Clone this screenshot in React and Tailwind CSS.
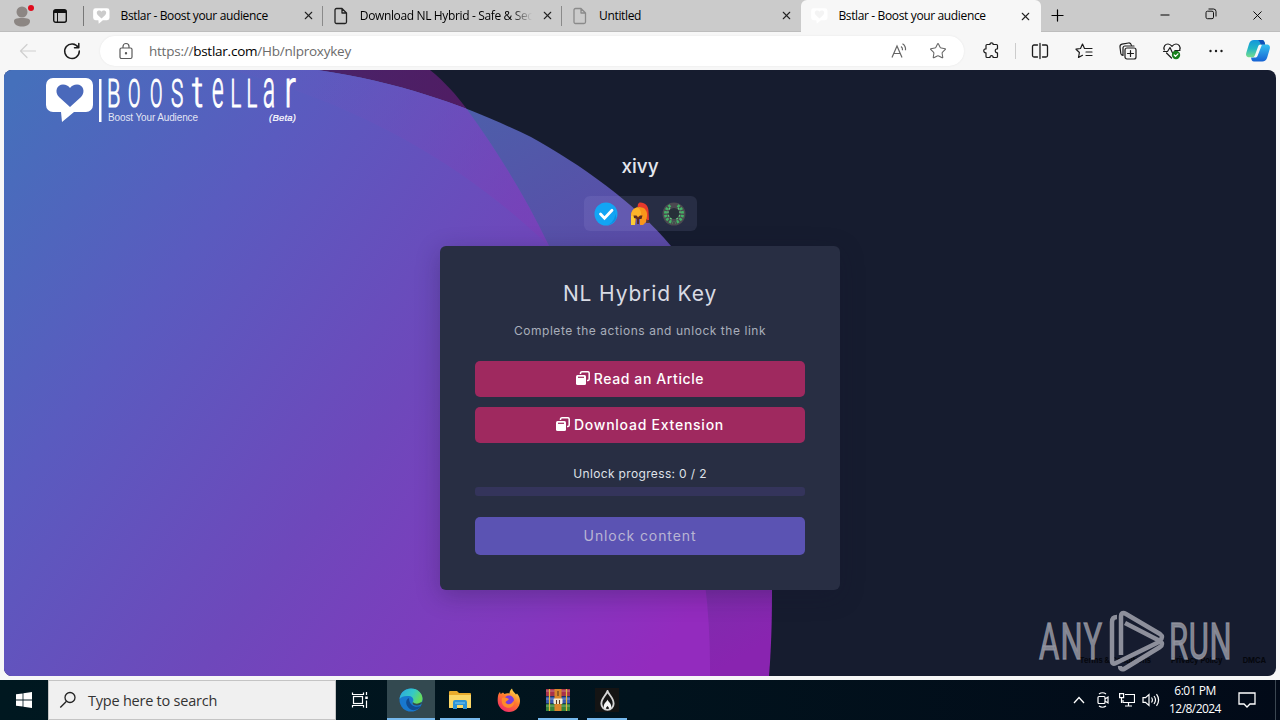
import { X, Plus, Minus, Star } from 'lucide-react';
import clsx from 'clsx';

const UI = "font-['Open_Sans','Noto_Sans',sans-serif]";

function Bubble({ className, fill = '#fff', heart = '#cbcbcb' }) {
  return (
    <svg viewBox="0 0 48 46" className={className}>
      <path d="M7 1h33a7 7 0 0 1 7 7v20a7 7 0 0 1-7 7H28L16 45l-1-10H7a7 7 0 0 1-7-7V8a7 7 0 0 1 7-7z" fill={fill} />
      <path d="M24 30 13 20C8 14.500 11 7.500 17 7.500c3 0 5.500 1.500 7 3.500 1.500-2 4-3.500 7-3.500 6 0 9 7 4 12.500z" fill={heart} />
    </svg>
  );
}

function PageIcon({ className }) {
  return (
    <svg viewBox="0 0 16 18" fill="none" stroke="currentColor" strokeWidth="1.300" strokeLinejoin="round" className={className}>
      <path d="M3.500 1.500h5.500l4.500 4.500v9a1.500 1.500 0 0 1-1.500 1.500H3.500A1.500 1.500 0 0 1 2 15V3a1.500 1.500 0 0 1 1.500-1.500zM9 1.500V6h4.500" />
    </svg>
  );
}

function Tab({ icon, title, active, faded, divider }) {
  return (
    <div className={clsx('relative flex h-8 w-[239.3px] shrink-0 items-center', active ? 'rounded-t-md bg-[#f7f7f7]' : 'border-b border-[#bdbdbd]')}>
      <span className="ml-[9px] flex w-[18px] shrink-0 justify-center">{icon}</span>
      <span className={clsx('ml-[10px] w-[172px] overflow-hidden text-[12px] tracking-[-0.36px] whitespace-nowrap text-black', faded && '[mask-image:linear-gradient(to_right,black_88%,transparent_100%)]')}>
        {title}
      </span>
      <X size={13} strokeWidth={2} className="ml-[9px] shrink-0 text-[#222]" />
      {divider && <span className="absolute top-1.5 right-0 h-5 w-px bg-[#8a8a8a]" />}
    </div>
  );
}

function TabStrip() {
  return (
    <div className="flex h-8 bg-[#cbcbcb]">
      <div className="relative flex w-[83.5px] shrink-0 items-center border-b border-[#bdbdbd]">
        <svg viewBox="0 0 24 24" className="ml-[10px] h-6 w-6">
          <circle cx="12" cy="8" r="5.500" fill="#8c8683" />
          <path d="M4 17c0-2 2-3 8-3s8 1 8 3c0 4-4 5.500-8 5.500S4 21 4 17z" fill="#8c8683" />
          <circle cx="21" cy="4" r="3" fill="#e00b1c" />
        </svg>
        <svg viewBox="0 0 16 16" className="ml-[18px] h-4 w-4" fill="none" stroke="#111">
          <rect x="1.700" y="1.700" width="12.600" height="12.600" rx="2" strokeWidth="1.400" />
          <path d="M2 3.500h12" strokeWidth="3" />
          <path d="M5.500 4v10" />
        </svg>
        <span className="absolute top-1.5 right-0 h-5 w-px bg-[#777]" />
      </div>
      <Tab divider icon={<Bubble className="h-4 w-[17px]" />} title="Bstlar - Boost your audience" />
      <Tab divider faded icon={<PageIcon className="h-[18px] w-4 text-[#222]" />} title="Download NL Hybrid - Safe & Secure" />
      <Tab icon={<PageIcon className="h-[18px] w-4 text-[#8a8a8a]" />} title="Untitled" />
      <Tab active icon={<Bubble className="h-4 w-[17px]" heart="#f4f4f4" />} title="Bstlar - Boost your audience" />
      <div className="flex flex-1 items-center border-b border-[#bdbdbd]">
        <Plus size={19} strokeWidth={1.500} className="ml-[7px]" />
        <div className="ml-auto flex">
          <span className="flex w-[46px] justify-center"><Minus size={14} strokeWidth={1.700} /></span>
          <span className="flex w-[46px] justify-center">
            <svg viewBox="0 0 12 12" className="h-3 w-3" fill="none" stroke="#111">
              <rect x="1" y="3.200" width="7.500" height="7.500" rx="1.500" />
              <path d="M3.500 1h5A2.500 2.500 0 0 1 11 3.500v5" />
            </svg>
          </span>
          <span className="flex w-[46px] justify-center"><X size={15} strokeWidth={1.500} /></span>
        </div>
      </div>
    </div>
  );
}

function ToolIcon({ children, className }) {
  return (
    <span className={clsx('flex w-11 shrink-0 justify-center', className)}>
      <svg viewBox="0 0 20 20" className="h-5 w-5" fill="none" stroke="#1c1c1c" strokeWidth="1.200" strokeLinecap="round" strokeLinejoin="round">
        {children}
      </svg>
    </span>
  );
}

function CopilotIcon() {
  return (
    <svg viewBox="0 0 26 24" className="h-6 w-[26px]">
      <defs>
        <linearGradient id="cpA" x1="0" y1="0" x2="0" y2="1">
          <stop offset="0" stopColor="#1496dc" />
          <stop offset="0.500" stopColor="#23b6c4" />
          <stop offset="1" stopColor="#79dd8c" />
        </linearGradient>
        <linearGradient id="cpB" x1="0" y1="0" x2="0" y2="1">
          <stop offset="0" stopColor="#35c0f0" />
          <stop offset="1" stopColor="#1662d4" />
        </linearGradient>
      </defs>
      <path d="M17 5.500h4.500c3 0 4 2 3.200 4.600l-2.500 8.400c-.8 2.800-2.500 4-5 4H9c-2 0-2.500-1.500-3-4h4c1.500 0 2.300-.8 2.800-2.300z" fill="url(#cpB)" />
      <path d="M9 1h8c2 0 2.500 1.500 3.200 4.500h-4.400c-1.500 0-2.300.8-2.800 2.300L10 16c-.5 1.600-1.300 2.300-2.800 2.300H4.500c-3 0-4-2-3.200-4.600L4 5C4.800 2.200 6.500 1 9 1z" fill="url(#cpA)" />
      <path d="M15.800 5.500h4.400C19.500 2.500 19 1 17 1h-4c1.300.8 1.800 2 2.800 4.500z" fill="#1150b8" />
    </svg>
  );
}

function Toolbar() {
  return (
    <div className="flex h-[38px] items-center">
      <ToolIcon className="ml-1.5">
        <path d="M17.500 10h-15M9 3.500 2.500 10 9 16.500" stroke="#cfcfcf" />
      </ToolIcon>
      <ToolIcon>
        <path d="M16.300 6.500A7.300 7.300 0 1 0 17.300 10M16.800 2.500v4.300h-4.300" strokeWidth="1.500" />
      </ToolIcon>
      <div className="ml-1.5 flex h-[30px] w-[864px] shrink-0 items-center rounded-full bg-white shadow-[0_0_2px_#e4e4e4]">
        <svg viewBox="0 0 16 18" className="ml-[18px] h-[18px] w-4" fill="none" stroke="#5a5a5a" strokeWidth="1.200">
          <rect x="2" y="6" width="12" height="10.500" rx="1.500" />
          <path d="M5 6V4.500a3 3 0 0 1 6 0V6" />
          <circle cx="8" cy="11.300" r="0.600" fill="#5a5a5a" />
        </svg>
        <span className="ml-[15px] text-[13.500px] tracking-[-0.24px] text-[#6b6b6b]">
          https://<span className="text-black">bstlar.com</span>/Hb/nlproxykey
        </span>
        <svg viewBox="0 0 18 18" className="mr-[21px] ml-auto h-[18px] w-[18px]" fill="none" stroke="#666" strokeWidth="1.200">
          <path d="M2 15.500 7 4l5 11.500M3.800 11.500h6.400M11 4.500c1.200.8 1.700 2 1.500 3.700M12.500 1.800c2.300 1.400 3.300 3.600 3 6.400" />
        </svg>
        <Star size={18} strokeWidth={1.400} className="mr-[17px] text-[#666]" />
      </div>
      <ToolIcon className="w-[54px]">
        <path d="M6 3.500h3c-.3-2.300 3.400-2.300 3.100 0h3.400a1 1 0 0 1 1 1v3.300c-3-.4-3 4.300 0 4v3.700a1 1 0 0 1-1 1h-3.400c.3-2.500-3.400-2.500-3.100 0H6a1 1 0 0 1-1-1v-3.700c-3 .4-3-4.400 0-4V4.500a1 1 0 0 1 1-1z" />
      </ToolIcon>
      <span className="-mr-px -ml-[3px] h-4 w-px bg-[#ccc]" />
      <ToolIcon className="ml-[3px]">
        <path d="M7.500 4H4a1.500 1.500 0 0 0-1.500 1.500v9A1.500 1.500 0 0 0 4 16h3.500M12.500 4H16a1.500 1.500 0 0 1 1.500 1.500v9A1.500 1.500 0 0 1 16 16h-3.500M10 2.500v15" strokeWidth="1.300" />
      </ToolIcon>
      <ToolIcon>
        <path d="M10.500 7.500 8.500 3 6.500 7.500 2 8.200l3.400 3.300-.9 5 4-2.200M10.500 7.500H18M12 11h6M12 14.500h6" />
      </ToolIcon>
      <ToolIcon>
        <rect x="7" y="7" width="11" height="11" rx="2" />
        <path d="M12.500 9.500v6M9.500 12.500h6M5 14.500c-1.500-.3-2-1-2.200-2L2 6c-.2-1.500.5-2.500 2-2.800L10.500 2c1.500-.2 2.500.5 2.800 2M5 14.500V7a2 2 0 0 1 2-2h9" />
      </ToolIcon>
      <ToolIcon>
        <path d="M2.300 9C1 5.500 3.500 3 6 3c2 0 3 1 4 2.300C11 4 12 3 14 3c2.500 0 5 2.500 3.700 6M4.500 12l5 5M1.500 10.500h4L8 6.500l3 6.500 2-3.500h5" />
        <circle cx="14" cy="14" r="4.200" fill="#17801b" stroke="none" />
        <path d="m12.200 14 1.300 1.400 2.400-2.600" stroke="#fff" />
      </ToolIcon>
      <ToolIcon>
        <g fill="#1c1c1c" stroke="none">
          <circle cx="4.500" cy="10" r="1.200" />
          <circle cx="10" cy="10" r="1.200" />
          <circle cx="15.500" cy="10" r="1.200" />
        </g>
      </ToolIcon>
      <span className="ml-[7px] shrink-0"><CopilotIcon /></span>
    </div>
  );
}

function Backdrop() {
  return (
    <svg viewBox="4 70 1272 606" className="absolute inset-0 h-full w-full">
      <defs>
        <linearGradient id="main" gradientUnits="userSpaceOnUse" x1="10" y1="90" x2="700" y2="600">
          <stop offset="0" stopColor="#4570bb" />
          <stop offset="0.280" stopColor="#5a5bbf" />
          <stop offset="0.580" stopColor="#6e48bb" />
          <stop offset="0.850" stopColor="#8338be" />
          <stop offset="1" stopColor="#932bbe" />
        </linearGradient>
        <linearGradient id="blue" gradientUnits="userSpaceOnUse" x1="440" y1="80" x2="770" y2="640">
          <stop offset="0" stopColor="#4a62aa" />
          <stop offset="0.350" stopColor="#5a4da8" />
          <stop offset="0.700" stopColor="#6d3aa8" />
          <stop offset="1" stopColor="#8924b0" />
        </linearGradient>
        <linearGradient id="plum" gradientUnits="userSpaceOnUse" x1="340" y1="70" x2="470" y2="110">
          <stop offset="0" stopColor="#4a2268" />
          <stop offset="1" stopColor="#501c63" />
        </linearGradient>
        <linearGradient id="sheen" gradientUnits="userSpaceOnUse" x1="300" y1="70" x2="520" y2="200">
          <stop offset="0" stopColor="#6658be" stopOpacity="0.200" />
          <stop offset="1" stopColor="#7a40b8" stopOpacity="0.650" />
        </linearGradient>
        <clipPath id="disc">
          <path d="M4 70H318C410 84 475 110 531 137C580 164 635 203 671 246C738 330 772 450 772 590C772 625 771 650 769 676H4z" />
        </clipPath>
      </defs>
      <path d="M300 70H430C445 82 457 96 466 108C500 155 526 198 549 246L400 250z" fill="url(#plum)" />
      <g clipPath="url(#disc)">
        <rect x="4" y="70" width="780" height="606" fill="url(#blue)" />
        <path d="M4 70H430C445 82 457 96 466 108C500 155 526 198 549 246C640 360 712 480 710 676H4z" fill="url(#main)" />
        <path d="M230 70H430C445 82 457 96 466 108C500 155 526 198 549 246C480 180 380 110 230 70z" fill="url(#sheen)" />
      </g>
    </svg>
  );
}

// letter, left edge, font size, horizontal squeeze
const LOGO_LETTERS = [
  ['B', 107, 39, 0.56], ['O', 128, 39, 0.47], ['O', 150, 39, 0.47], ['S', 171, 39, 0.53], ['t', 192, 43, 0.8],
  ['e', 212, 51, 0.44], ['L', 230.5, 39, 0.52], ['L', 246.5, 39, 0.52], ['a', 263, 51, 0.44], ['r', 284.500, 51, 0.66],
];

function Logo() {
  return (
    <div className="flex h-[60px] items-start pt-[7px] pl-[42px]">
      <Bubble className="h-[46px] w-[48px]" heart="#4a69bb" />
      <svg viewBox="98 77 200 46" className="ml-1 h-[46px] w-[200px] overflow-visible" fill="#fff">
        <rect x="99" y="79" width="2.500" height="43" />
        {LOGO_LETTERS.map(([ch, x, size, squeeze], i) => (
          <text
            key={i}
            transform={`translate(${x} 107) scale(${squeeze} 1)`}
            fontSize={size}
            fontWeight="300"
            fontFamily="Roboto, sans-serif"
            stroke="#fff"
            strokeWidth="0.9"
            vectorEffect="non-scaling-stroke"
          >
            {ch}
          </text>
        ))}
        <text x="108" y="121" fontSize="10" textLength="90" fontFamily="Liberation Sans, sans-serif" fillOpacity="0.850">Boost Your Audience</text>
        <text x="269" y="120.500" fontSize="9.500" textLength="27" fontStyle="italic" fontFamily="Liberation Sans, sans-serif" stroke="#fff" strokeWidth="0.200">(Beta)</text>
      </svg>
    </div>
  );
}

function Badges() {
  return (
    <div className="mt-[15px] flex h-[35px] w-[113px] items-center justify-center gap-2.5 rounded-md bg-[#c8c8ff]/10">
      <svg viewBox="0 0 24 24" className="h-6 w-6">
        <circle cx="12" cy="12" r="11.500" fill="#12a5f4" />
        <path d="M19 6a11 11 0 0 1-6 17 11.500 11.500 0 0 0 9.500-7z" fill="#0c8fe0" />
        <path d="m6.500 12 4 4.200 7.500-8" fill="none" stroke="#fff" strokeWidth="2.800" strokeLinecap="round" />
      </svg>
      <svg viewBox="0 0 24 24" className="h-6 w-6">
        <path d="M10 2 11.500.5C17 0 20.500 4 20.500 9l.5 9-3 1V9C16 6 13 4.500 9.500 5z" fill="#e63a2c" />
        <path d="M3 14C3 8 7 5 11.500 5 17 5 19.500 9 19 14l-1 6-3 3h-3v-6H8l-1 6H3z" fill="#f9961a" />
        <path d="M3 14C3 9 6 6 10 5.500 13 8 13.500 12 13 14H3z" fill="#fbb32a" />
        <path d="M3 14h5v3H7v6H3z" fill="#fccb35" />
        <path d="M5.500 13.500h3l1.500 2 2-2h2.500l-1 3.500H11v5H9v-5l-3-1z" fill="#5b2c22" />
        <path d="m18.500 17 3.500 4h-4z" fill="#5a3630" />
      </svg>
      <svg viewBox="0 0 24 24" className="h-6 w-6">
        <circle cx="12" cy="12" r="11.500" fill="#4b4950" />
        <circle cx="12" cy="11.500" r="5.500" fill="#273038" />
        <g fill="none" stroke="#43b266" strokeWidth="3" strokeDasharray="2.400 1.300">
          <path d="M8.500 3.500C1 8 2 18.500 11 20.500M15.500 3.500C23 8 22 18.500 13 20.500" />
        </g>
        <path d="M8 6C4.500 10 5.500 15.500 11 18M16 6c3.500 4 2.500 9.500-3 12" fill="none" stroke="#63c57d" strokeWidth="1.300" strokeDasharray="2 1.700" />
      </svg>
    </div>
  );
}

function ActionButton({ children, className }) {
  return (
    <button className={clsx('flex h-9 w-full items-center justify-center gap-1 rounded-[5px] bg-[#9f295f] pb-0.5 text-[14px] font-medium text-white', className)}>
      <svg viewBox="0 0 14 14" className="h-3.5 w-3.5">
        <path d="M4.500 3V2A1.500 1.500 0 0 1 6 .8h6A1.300 1.300 0 0 1 13.200 2v6A1.500 1.500 0 0 1 12 9.500h-1" fill="none" stroke="#fff" strokeWidth="1.500" />
        <rect x="0" y="4" width="10" height="10" rx="1.500" fill="#fff" />
        <path d="M2 6.300h6" stroke="#9f295f" strokeWidth="1.200" />
      </svg>
      {children}
    </button>
  );
}

function UnlockCard() {
  return (
    <div className="mt-[15px] flex h-[344px] w-[400px] flex-col items-center rounded-md bg-[#282e43] px-[35px] pt-[32px] shadow-[0_6px_24px_rgba(20,20,45,0.28)]">
      <h2 className="text-[21px] leading-8 tracking-[0.85px] whitespace-nowrap text-[#d8dbe4]">NL Hybrid Key</h2>
      <p className="mt-[11px] text-[12px] leading-5 tracking-[0.55px] whitespace-nowrap text-[#a9aebb]">Complete the actions and unlock the link</p>
      <div className="mt-5 flex w-full flex-col gap-2.5">
        <ActionButton className="tracking-[0.6px]">Read an Article</ActionButton>
        <ActionButton className="tracking-[0.75px]">Download Extension</ActionButton>
      </div>
      <p className="mt-[21px] text-[12px] leading-5 tracking-[0.35px] text-[#dfe1e8]">Unlock progress: 0 / 2</p>
      <div className="mt-[3px] h-[9px] w-full rounded-[3px] bg-[#34345b]" />
      <button className="mt-[21px] h-[38px] w-full rounded-[5px] bg-[#5b53b3] pb-0.5 text-[14px] tracking-[0.9px] text-[#b9b5d3]">Unlock content</button>
    </div>
  );
}

function Watermark() {
  return (
    <svg viewBox="1036 608 198 66" className="absolute right-[42px] bottom-0.5 h-[66px] w-[198px]" fill="#9698a3" fillOpacity="0.850">
      <g stroke="#9698a3" strokeWidth="1.300" strokeOpacity="0.800" fontSize="50" fontFamily="Roboto, sans-serif">
        <text transform="translate(1039 659) scale(0.62 1)" textLength="102">ANY</text>
        <text transform="translate(1169 659) scale(0.62 1)" textLength="101">RUN</text>
      </g>
      <g fill="none" stroke="#8d8f9b" strokeWidth="4.500" strokeLinejoin="round">
        <path d="M1117 617q-5 0-5 5v39q0 4 4 2l45-22" />
        <path d="M1121 655v-38q0-6 5-3l34 20q4 3 0 6" />
        <path d="m1125 623 35 18q4 3 0 6l-36 22q-4 1-4-3" />
      </g>
    </svg>
  );
}

function Page() {
  return (
    <main className="relative mx-1 h-[606px] overflow-hidden rounded-lg bg-[#161c2f] font-['Inter',sans-serif]">
      <Backdrop />
      <div className="relative">
        <Logo />
        <div className="flex flex-col items-center">
          <h1 className="mt-[23px] text-[19px] leading-7 font-medium text-[#e4e6ee]">xivy</h1>
          <Badges />
          <UnlockCard />
        </div>
      </div>
      <footer className="absolute right-2.5 bottom-[9px] flex gap-5 text-[7.500px] leading-3 font-bold text-[#05070d]">
        <span>Terms &amp; Conditions</span>
        <span>Privacy Policy</span>
        <span>DMCA</span>
      </footer>
      <Watermark />
    </main>
  );
}

function TaskApp({ children, active, open }) {
  return (
    <span className={clsx('relative flex h-10 w-12 items-center justify-center', active && 'bg-[#334950]')}>
      {children}
      {(open || active) && <span className={clsx('absolute bottom-0 h-0.5 bg-[#76b9ed]', active ? 'w-12' : 'w-10')} />}
    </span>
  );
}

function Taskbar() {
  return (
    <div className="mt-1 flex h-10 items-center bg-linear-to-r from-[#001820] via-[#01131d] to-[#020a18] text-white">
      <span className="flex w-12 justify-center">
        <svg viewBox="0 0 16 16" className="h-4 w-4" fill="#fff">
          <path d="M0 2.300 6.600 1.400V7.600H0zM7.400 1.300 16 0v7.600H7.400zM0 8.400h6.600v6.200L0 13.700zM7.400 8.400H16V16l-8.600-1.300z" />
        </svg>
      </span>
      <div className="flex h-10 w-72 items-center border border-[#c4c4c4] bg-[#f0f0f0] text-[#333]">
        <svg viewBox="0 0 18 18" className="ml-[10px] h-[18px] w-[18px]" fill="none" stroke="#222" strokeWidth="1.300">
          <circle cx="11" cy="6.500" r="5" />
          <path d="m7.500 10.200-6.200 6.300" />
        </svg>
        <span className="ml-[11px] pt-0.5 text-[14.500px] tracking-[-0.23px]">Type here to search</span>
      </div>
      <span className="flex w-[51px] justify-center pr-[3px]">
        <svg viewBox="0 0 18 16" className="h-4 w-[18px]" fill="none" stroke="#fff" strokeWidth="1.200">
          <rect x="2.500" y="4.500" width="9" height="7" />
          <path d="M1.500.5v2h11v-2M1.500 15.500v-2h11v2M15.500 0v3M15.500 8.500V16" />
          <path d="M15.500 4.500v2.500" strokeWidth="2.500" />
        </svg>
      </span>
      <TaskApp active>
        <svg viewBox="0 0 24 24" className="h-6 w-6">
          <defs>
            <linearGradient id="edgeTop" x1="0" y1="0" x2="1" y2="0.400">
              <stop offset="0" stopColor="#2ba6e0" />
              <stop offset="0.600" stopColor="#35c9c6" />
              <stop offset="1" stopColor="#66dc5c" />
            </linearGradient>
          </defs>
          <circle cx="12" cy="12" r="11.500" fill="#1878cf" />
          <path d="M.5 11C1.500 4 6.500.5 12 .5c7 0 11.500 5 11.500 10 0 4-3 6-6.500 6-3 0-4-1-3.500-2 1.800-2 1-6-3.500-6.500C6 7.500 2 8.500.5 11z" fill="url(#edgeTop)" />
          <path d="M10 10c-5 2-3 10 3 12 4 .7 7.500-1.500 9-4-6 2.500-12-1-12-8z" fill="#114c92" />
          <path d="M24 14c-1.500 2.500-4 3.800-6.500 3.500-2 0-3.500-1-4-2.300 0-.7.300-1 .5-1.300 1 1.800 5 2.500 7.500.6z" fill="#334950" />
        </svg>
      </TaskApp>
      <span className="w-px" />
      <TaskApp open>
        <svg viewBox="0 0 22 20" className="h-5 w-[22px]">
          <path d="M0 2q0-1 1-1h7l2 2h11q1 0 1 1v14H0z" fill="#e9ab2c" />
          <path d="M0 5h22v12q0 1-1 1H1q-1 0-1-1z" fill="#fbd767" />
          <path d="M4 19v-7q0-2 2-2h10q2 0 2 2v7h-4v-4H8v4z" fill="#2e93d6" />
          <path d="M6 13h10" stroke="#7fc9f2" />
        </svg>
      </TaskApp>
      <span className="w-px" />
      <TaskApp>
        <svg viewBox="0 0 24 24" className="h-6 w-6">
          <defs>
            <linearGradient id="fox" x1="0.800" y1="0" x2="0.200" y2="1">
              <stop offset="0" stopColor="#ffe24a" />
              <stop offset="0.450" stopColor="#ff7a2d" />
              <stop offset="1" stopColor="#f0246c" />
            </linearGradient>
          </defs>
          <path d="M1 8c.3-2 1-3 2-4l.7 2L6 4.500 7.500 6C9 5 11 5 12.500 5.500 12.500 3.500 13.500 1.500 15 .5c.5 3 3 4 4 6l1-1c2 2.500 3 4.500 3 7.500C23 19.500 18 24 12 24S.8 19 .7 13c0-2 0-3 .3-5z" fill="url(#fox)" />
          <circle cx="12" cy="12.500" r="5" fill="#7a3cdc" />
          <path d="M5 10c3-1 5 0 7 1-1 2-3 1.500-3.500 3.500 2 3 7 2 8-2 2 5-3 8.500-7 7-4-1-5.500-5-4.500-9.500z" fill="#ff8a2b" />
        </svg>
      </TaskApp>
      <span className="w-px" />
      <TaskApp open>
        <svg viewBox="0 0 24 22" className="h-[22px] w-6">
          <rect width="24" height="7" y="0" fill="#a8324b" />
          <rect width="24" height="7" y="7.500" fill="#3659ad" />
          <rect width="24" height="7" y="15" fill="#34833b" />
          <path d="M0 2h24M0 10h24M0 17h24" stroke="#ffffff" strokeOpacity="0.350" />
          <path d="M3.500 0v22M20.500 0v22" stroke="#e5b93d" strokeWidth="1.200" />
          <rect x="8.500" width="7" height="22" fill="#d9852b" />
          <rect x="7.500" y="9.500" width="9" height="5.500" rx="1" fill="#f4ecd4" />
          <path d="M10.500 11v4M13.500 11v4M12 2v5" stroke="#5a3a22" strokeWidth="1.100" />
        </svg>
      </TaskApp>
      <span className="w-px" />
      <TaskApp open>
        <span className="flex h-6 w-6 items-center justify-center bg-[#141414]">
          <svg viewBox="0 0 16 22" className="h-[21px] w-[15px]">
            <path d="M8 1c1 3.500 6.500 7 6.500 13A6.500 6.500 0 0 1 8 21a6.500 6.500 0 0 1-6.500-7C1.500 9 6 6 8 1z" fill="#141414" stroke="#d4d4d4" strokeWidth="2" />
            <path d="M8 10c.5 2 4 4 4 7.500 0 1.500-.8 2.500-2 3-.2-2-1-2.500-2-3.700-1 1.200-1.800 1.700-2 3.700-1.200-.5-2-1.500-2-3C4 14 7.500 12 8 10z" fill="#f5f5f5" />
          </svg>
        </span>
      </TaskApp>
      <div className="ml-auto flex h-full items-center">
        <span className="flex w-6 justify-center">
          <svg viewBox="0 0 12 8" className="h-2 w-3" fill="none" stroke="#fff" strokeWidth="1.300"><path d="m1 7 5-5.500L11 7" /></svg>
        </span>
        <span className="flex w-6 justify-center">
          <svg viewBox="0 0 14 16" className="h-4 w-3.5" fill="none" stroke="#fff" strokeWidth="1.200">
            <rect x="2" y="4.500" width="7" height="7" rx="1" />
            <path d="m9 7 3-2v6L9 9M3 2q3.500-2.500 7 0M3 14q3.500 2.500 7 0" />
          </svg>
        </span>
        <span className="flex w-6 justify-center">
          <svg viewBox="0 0 16 14" className="h-3.5 w-4" fill="none" stroke="#fff" strokeWidth="1.200">
            <path d="M6 1.500h9.500v8H4V7M9.500 9.500v3.500M6 13h7" />
            <path d="M.6.600h4v4h-4zM2.500 4.500V10" />
          </svg>
        </span>
        <span className="flex w-6 justify-center">
          <svg viewBox="0 0 18 14" className="h-3.5 w-[18px]" fill="none" stroke="#fff" strokeWidth="1.200">
            <path d="M1 4.700h2.500L7 1.500v11L3.500 9.300H1zM9.500 4.500q1.800 2.500 0 5M12 3q3 4 0 8M14.500 1.200q4.200 5.800 0 11.600" />
          </svg>
        </span>
        <div className="flex w-16 flex-col items-center text-[12px] leading-[18px] tracking-[-0.5px] whitespace-nowrap">
          <span>6:01 PM</span>
          <span className="tracking-[-0.55px]">12/8/2024</span>
        </div>
        <span className="flex w-10 justify-center">
          <svg viewBox="0 0 18 16" className="h-4 w-[18px]" fill="none" stroke="#fff" strokeWidth="1.300">
            <path d="M1 1h16v11h-5l-3 3-3-3H1z" />
          </svg>
        </span>
        <span className="ml-2 h-full w-px bg-[#3b4651]" />
        <span className="w-1" />
      </div>
    </div>
  );
}

export default function App() {
  return (
    <div className={clsx('h-[720px] w-[1280px] overflow-hidden bg-[#f7f7f7]', UI)}>
      <TabStrip />
      <Toolbar />
      <Page />
      <Taskbar />
    </div>
  );
}
